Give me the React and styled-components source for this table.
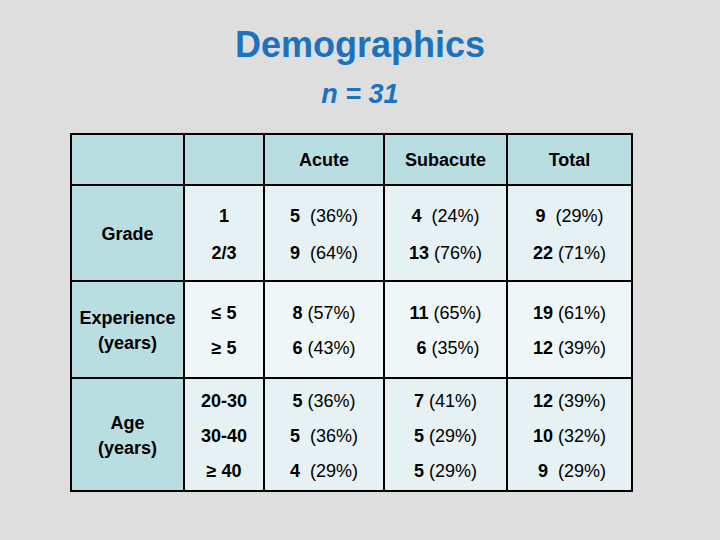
import styled, { createGlobalStyle } from 'styled-components';

const GlobalStyle = createGlobalStyle`
  html, body { margin: 0; padding: 0; }
  body {
    width: 720px;
    height: 540px;
    overflow: hidden;
    background: #dedede;
    font-family: "Liberation Sans", Arial, sans-serif;
  }
`;

const Slide = styled.div`
  width: 720px;
  height: 540px;
  display: flex;
  flex-direction: column;
`;

const Title = styled.h1`
  margin: 24px 0 0;
  text-align: center;
  font-size: 36px;
  line-height: 42px;
  font-weight: bold;
  color: #1b72be;
`;

const Subtitle = styled.div`
  margin-top: 13px;
  text-align: center;
  font-size: 27px;
  line-height: 30px;
  font-weight: bold;
  font-style: italic;
  color: #1b72be;
`;

const Table = styled.table`
  margin: 24px 0 0 70px;
  width: 563px;
  table-layout: fixed;
  border-collapse: collapse;
  border: 2px solid #000;
  font-size: 18px;
  color: #000;
`;

const Th = styled.th`
  height: 47px;
  padding: 2px 0 0;
  border: 2px solid #000;
  background: #b9dee2;
  font-weight: bold;
  text-align: center;
`;

const Label = styled.td`
  padding: 3px 0 0;
  border: 2px solid #000;
  background: #b9dee2;
  font-weight: bold;
  text-align: center;
  line-height: 25px;
`;

const Cell = styled.td`
  height: ${p => p.$h}px;
  padding: 2px 0 0;
  border: 2px solid #000;
  background: ${p => (p.$light ? '#eff6f8' : '#e5f1f3')};
  text-align: center;
  vertical-align: middle;
`;

const Lines = styled.div`
  display: flex;
  flex-direction: column;
  align-items: center;
  gap: ${p => p.$gap}px;
`;

const Line = styled.div`
  white-space: pre;
  line-height: 20px;
  font-weight: ${p => (p.$bold ? 'bold' : 'normal')};
`;

const Num = styled.b``;

const widths = [113, 80, 120, 123, 125];

const sections = [
  {
    label: 'Grade',
    h: 92,
    gap: 17,
    light: false,
    rows: [
      ['1', '5', '  (36%)', '4', '  (24%)', '9', '  (29%)'],
      ['2/3', '9', '  (64%)', '13', ' (76%)', '22', ' (71%)'],
    ],
  },
  {
    label: 'Experience\n(years)',
    h: 93,
    gap: 15,
    light: true,
    rows: [
      ['≤ 5', '8', ' (57%)', '11', ' (65%)', '19', ' (61%)'],
      ['≥ 5', '6', ' (43%)', ' 6', ' (35%)', '12', ' (39%)'],
    ],
  },
  {
    label: 'Age\n(years)',
    h: 109,
    gap: 15,
    light: false,
    rows: [
      ['20-30', '5', ' (36%)', '7', ' (41%)', '12', ' (39%)'],
      ['30-40', '5', '  (36%)', '5', ' (29%)', '10', ' (32%)'],
      ['≥ 40', '4', '  (29%)', '5', ' (29%)', ' 9', '  (29%)'],
    ],
  },
];

function Column({ sec, idx }) {
  return (
    <Cell $h={sec.h} $light={sec.light}>
      <Lines $gap={sec.gap}>
        {sec.rows.map((r, i) => (
          <Line key={i}>
            <Num>{r[idx]}</Num>{r[idx + 1]}
          </Line>
        ))}
      </Lines>
    </Cell>
  );
}

export default function App() {
  return (
    <>
      <GlobalStyle />
      <Slide>
        <Title>Demographics</Title>
        <Subtitle>n = 31</Subtitle>
        <Table>
          <colgroup>
            {widths.map((w, i) => <col key={i} style={{ width: w }} />)}
          </colgroup>
          <thead>
            <tr>
              <Th></Th>
              <Th></Th>
              <Th>Acute</Th>
              <Th>Subacute</Th>
              <Th>Total</Th>
            </tr>
          </thead>
          <tbody>
            {sections.map(sec => (
              <tr key={sec.label}>
                <Label>
                  {sec.label.split('\n').map(t => <div key={t}>{t}</div>)}
                </Label>
                <Cell $h={sec.h} $light={sec.light}>
                  <Lines $gap={sec.gap}>
                    {sec.rows.map((r, i) => (
                      <Line key={i} $bold>{r[0]}</Line>
                    ))}
                  </Lines>
                </Cell>
                <Column sec={sec} idx={1} />
                <Column sec={sec} idx={3} />
                <Column sec={sec} idx={5} />
              </tr>
            ))}
          </tbody>
        </Table>
      </Slide>
    </>
  );
}
